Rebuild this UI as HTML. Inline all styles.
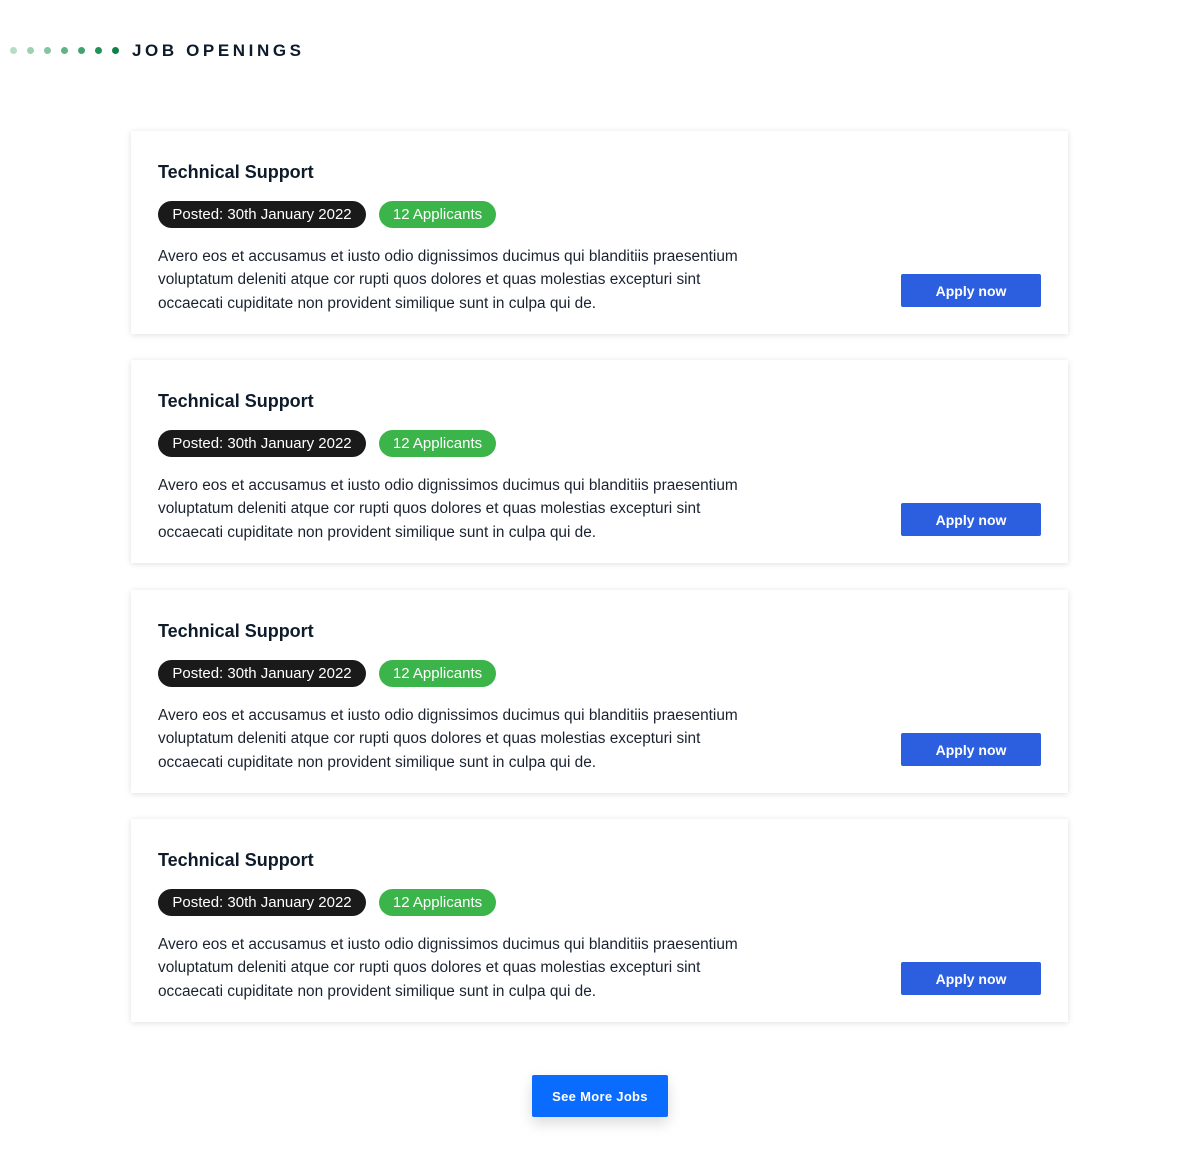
<!DOCTYPE html>
<html><head><style>
body{margin:0;width:1200px;height:1152px;background:#fff;font-family:"Liberation Sans",sans-serif;position:relative;overflow:hidden}
.hd{position:absolute;left:0;top:40px;height:20px;width:400px}
.dot{position:absolute;top:7px;width:7px;height:7px;border-radius:50%}
.ht{position:absolute;left:132px;top:1px;font-weight:bold;font-size:17px;letter-spacing:3.6px;color:#0d1b2a}
.card{position:absolute;left:131px;width:937px;height:203px;background:#fff;box-shadow:0 1px 6px rgba(0,0,0,.13)}
.t{position:absolute;left:27px;top:31px;font-size:18px;font-weight:bold;color:#0d1b2a}
.p1{position:absolute;left:27px;top:70px;height:27px;width:208px;border-radius:14px;background:#1a1a1a;color:#fff;font-size:15px;line-height:28px;text-align:center}
.p2{position:absolute;left:248px;top:70px;height:27px;width:117px;border-radius:14px;background:#3bb54a;color:#fff;font-size:15px;line-height:28px;text-align:center}
.d{position:absolute;left:27px;top:114px;width:590px;font-size:15.4px;line-height:23.3px;color:#1a2230}
.b{position:absolute;left:770px;top:143px;width:140px;height:33px;background:#2b5fe0;color:#fff;font-size:14px;font-weight:bold;line-height:34px;text-align:center;border-radius:2px}
.more{position:absolute;left:532px;top:1075px;width:136px;height:42px;background:#0a6cff;color:#fff;font-weight:bold;font-size:13px;line-height:43px;text-align:center;border-radius:2px;box-shadow:0 6px 14px rgba(0,0,0,.15);letter-spacing:.3px}
</style></head><body>
<div class="hd">
<div class="dot" style="left:10px;background:#b7dcc7"></div>
<div class="dot" style="left:27px;background:#9ed0b3"></div>
<div class="dot" style="left:44px;background:#84c49f"></div>
<div class="dot" style="left:61px;background:#62b286"></div>
<div class="dot" style="left:78px;background:#45a270"></div>
<div class="dot" style="left:95px;background:#24905a"></div>
<div class="dot" style="left:112px;background:#0d8248"></div>
<div class="ht">JOB OPENINGS</div>
</div>
<div class="card" style="top:131px"><div class="t">Technical Support</div><div class="p1">Posted: 30th January 2022</div><div class="p2">12 Applicants</div><div class="d">Avero eos et accusamus et iusto odio dignissimos ducimus qui blanditiis praesentium voluptatum deleniti atque cor rupti quos dolores et quas molestias excepturi sint occaecati cupiditate non provident similique sunt in culpa qui de.</div><div class="b">Apply now</div></div>
<div class="card" style="top:360px"><div class="t">Technical Support</div><div class="p1">Posted: 30th January 2022</div><div class="p2">12 Applicants</div><div class="d">Avero eos et accusamus et iusto odio dignissimos ducimus qui blanditiis praesentium voluptatum deleniti atque cor rupti quos dolores et quas molestias excepturi sint occaecati cupiditate non provident similique sunt in culpa qui de.</div><div class="b">Apply now</div></div>
<div class="card" style="top:590px"><div class="t">Technical Support</div><div class="p1">Posted: 30th January 2022</div><div class="p2">12 Applicants</div><div class="d">Avero eos et accusamus et iusto odio dignissimos ducimus qui blanditiis praesentium voluptatum deleniti atque cor rupti quos dolores et quas molestias excepturi sint occaecati cupiditate non provident similique sunt in culpa qui de.</div><div class="b">Apply now</div></div>
<div class="card" style="top:819px"><div class="t">Technical Support</div><div class="p1">Posted: 30th January 2022</div><div class="p2">12 Applicants</div><div class="d">Avero eos et accusamus et iusto odio dignissimos ducimus qui blanditiis praesentium voluptatum deleniti atque cor rupti quos dolores et quas molestias excepturi sint occaecati cupiditate non provident similique sunt in culpa qui de.</div><div class="b">Apply now</div></div>
<div class="more">See More Jobs</div>
</body></html>
